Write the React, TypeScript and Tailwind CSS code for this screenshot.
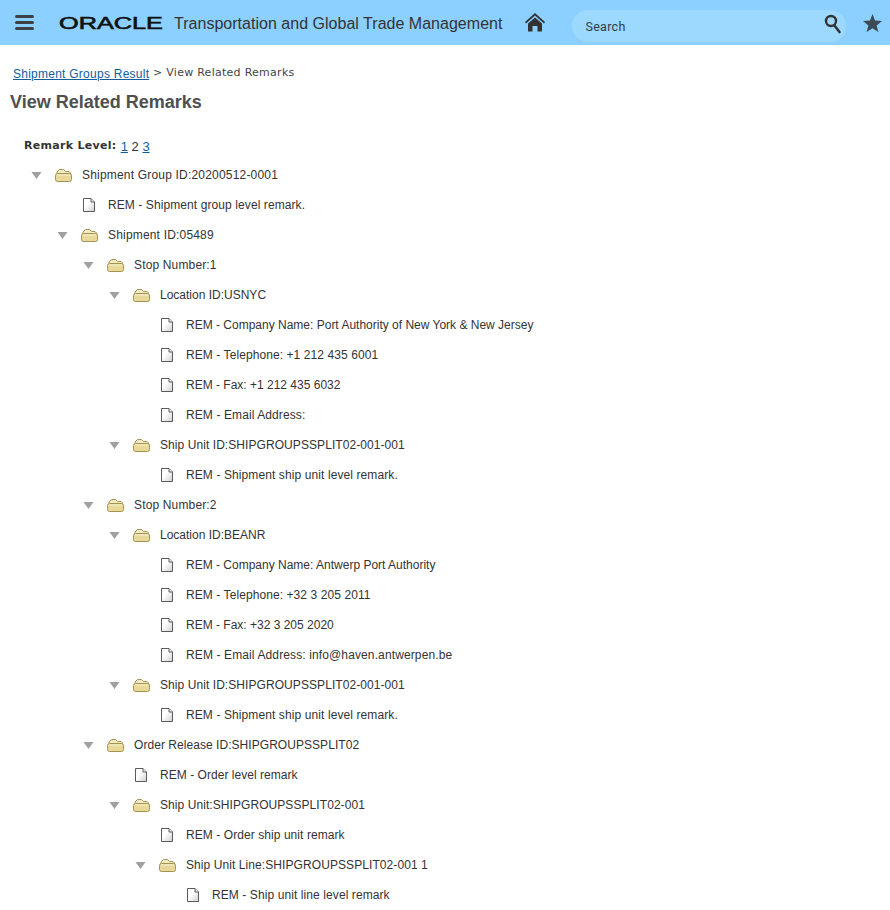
import React from 'react';

type Row = { level: number; text: string; folder?: boolean; ls?: number };

const ROWS: Row[] = [
  { level: 0, text: 'Shipment Group ID:20200512-0001', folder: true, ls: 0.19 },
  { level: 1, text: 'REM - Shipment group level remark.', ls: 0.09 },
  { level: 1, text: 'Shipment ID:05489', folder: true, ls: 0.18 },
  { level: 2, text: 'Stop Number:1', folder: true, ls: 0.15 },
  { level: 3, text: 'Location ID:USNYC', folder: true },
  { level: 4, text: 'REM - Company Name: Port Authority of New York & New Jersey' },
  { level: 4, text: 'REM - Telephone: +1 212 435 6001', ls: 0.08 },
  { level: 4, text: 'REM - Fax: +1 212 435 6032' },
  { level: 4, text: 'REM - Email Address:', ls: 0.1 },
  { level: 3, text: 'Ship Unit ID:SHIPGROUPSSPLIT02-001-001', folder: true, ls: 0.07 },
  { level: 4, text: 'REM - Shipment ship unit level remark.', ls: 0.1 },
  { level: 2, text: 'Stop Number:2', folder: true, ls: 0.15 },
  { level: 3, text: 'Location ID:BEANR', folder: true },
  { level: 4, text: 'REM - Company Name: Antwerp Port Authority' },
  { level: 4, text: 'REM - Telephone: +32 3 205 2011', ls: 0.08 },
  { level: 4, text: 'REM - Fax: +32 3 205 2020' },
  { level: 4, text: 'REM - Email Address: info@haven.antwerpen.be', ls: 0.12 },
  { level: 3, text: 'Ship Unit ID:SHIPGROUPSSPLIT02-001-001', folder: true, ls: 0.07 },
  { level: 4, text: 'REM - Shipment ship unit level remark.', ls: 0.1 },
  { level: 2, text: 'Order Release ID:SHIPGROUPSSPLIT02', folder: true, ls: 0.05 },
  { level: 3, text: 'REM - Order level remark', ls: 0.04 },
  { level: 3, text: 'Ship Unit:SHIPGROUPSSPLIT02-001', folder: true, ls: 0.07 },
  { level: 4, text: 'REM - Order ship unit remark', ls: 0.07 },
  { level: 4, text: 'Ship Unit Line:SHIPGROUPSSPLIT02-001 1', folder: true, ls: 0.08 },
  { level: 5, text: 'REM - Ship unit line level remark', ls: 0.09 },
];

const Arrow = () => (
  <svg width="11" height="7" viewBox="0 0 11 7" className="shrink-0">
    <path d="M0.5 0H10.5L5.5 7Z" fill="#a0a0a0" />
  </svg>
);

const Folder = () => (
  <svg width="17" height="13" viewBox="0 0 17 13" className="shrink-0">
    <path d="M2 4.5V3L4.5 0.5H8.5L10.5 2.5H14L15.5 4V5" fill="#f3eac4" stroke="#a39352" />
    <path d="M0.5 6.5Q0.5 4.5 2.5 4.5H14.5Q16.5 4.5 16.5 6.5V10.5Q16.5 12.5 14.5 12.5H2.5Q0.5 12.5 0.5 10.5Z" fill="#e8d99b" stroke="#a39352" />
    <path d="M2 6H15" stroke="#f6efd0" />
  </svg>
);

const Doc = () => (
  <svg width="12" height="14" viewBox="0 0 12 14" className="ml-px shrink-0">
    <defs>
      <linearGradient id="docFill" x1="0" y1="0" x2="1" y2="1">
        <stop offset="0.4" stopColor="#ffffff" />
        <stop offset="1" stopColor="#cfcfcf" />
      </linearGradient>
    </defs>
    <path d="M0.5 0.5H8L11.5 4V13.5H0.5Z" fill="url(#docFill)" stroke="#5a5a5a" />
    <path d="M8 0.5V4H11.5" fill="#eeeeee" stroke="#5a5a5a" />
  </svg>
);

const TreeRow = ({ row }: { row: Row }) => (
  <div className="flex h-[30px] items-center" style={{ paddingLeft: row.level * 26 }}>
    {row.folder ? (
      <>
        <span className="ml-[31px] flex w-[24px] shrink-0"><Arrow /></span>
        <span className="flex w-[27px] shrink-0"><Folder /></span>
      </>
    ) : (
      <span className="ml-[56px] flex w-[26px] shrink-0"><Doc /></span>
    )}
    <span className="whitespace-pre text-[#333333]" style={{ letterSpacing: row.ls ?? 0 }}>{row.text}</span>
  </div>
);

export default function App() {
  return (
    <div className="min-h-[910px] bg-white font-['Liberation_Sans',sans-serif] text-[12px]">
      {/* Header */}
      <header className="flex h-[45px] items-center bg-[#8bd0ff]">
        <div className="ml-[15px] flex w-[19px] flex-col gap-[2.5px]">
          <span className="h-[3.5px] rounded-sm bg-[#3d4045]" />
          <span className="h-[3.5px] rounded-sm bg-[#3d4045]" />
          <span className="h-[3.5px] rounded-sm bg-[#3d4045]" />
        </div>
        <svg width="106" height="20" viewBox="0 0 106 20" className="ml-[25px] shrink-0">
          <text x="0" y="15.5" textLength="104" lengthAdjust="spacingAndGlyphs" fontFamily="Liberation Sans" fontWeight="400" fontSize="17" stroke="#111111" strokeWidth="0.6" fill="#111111">ORACLE</text>
        </svg>
        <span className="ml-[9px] mt-[3px] whitespace-nowrap text-[16px] tracking-[0.02px] text-[#333333]">Transportation and Global Trade Management</span>
        <svg width="20" height="19" viewBox="0 0 20 19" className="ml-[23px] shrink-0">
          <path d="M10 0L0 9L1 10.5L10 2.6L19 10.5L20 9Z" fill="#333333" />
          <path d="M3 10.5L10 4.5L17 10.5V18.5H12.5V13H7.5V18.5H3Z" fill="#333333" />
        </svg>
        <div className="relative ml-[27px] mt-[7px] flex h-[32px] w-[274px] items-center rounded-[16px] bg-[#9dd9ff] pl-[13px] pt-[2px] font-['Roboto',sans-serif] text-[12.5px] tracking-[0.3px] text-[#333a4a]">
          Search
          <svg width="18" height="20" viewBox="0 0 18 20" className="absolute right-[4px] top-[4px]">
            <circle cx="7" cy="7" r="5" fill="none" stroke="#333333" strokeWidth="2.4" />
            <path d="M10.5 11.5L15.5 18" stroke="#333333" strokeWidth="2.6" strokeLinecap="round" />
          </svg>
        </div>
        <svg width="19" height="18" viewBox="0 0 19 18" className="ml-[17px] shrink-0">
          <path d="M9.5 0L12 6.4L19 7L13.6 11.4L15.4 18L9.5 14.3L3.6 18L5.4 11.4L0 7L7 6.4Z" fill="#3d4a55" />
        </svg>
      </header>

      {/* Breadcrumb */}
      <div className="ml-[13px] mt-[21px] flex h-[15px] items-center whitespace-pre">
        <a href="#" className="tracking-[0.25px] text-[#145c9e] underline">Shipment Groups Result</a>
        <span className="font-['DejaVu_Sans',sans-serif] text-[11px] tracking-[0.27px] text-[#444444]"> &gt; View Related Remarks</span>
      </div>

      <h1 className="ml-[10px] mt-[9px] h-[24px] text-[18px] font-bold leading-[24px] text-[#4f4f4f]">View Related Remarks</h1>

      {/* Remark level */}
      <div className="ml-[24px] mt-[25px] flex h-[15px] items-center whitespace-pre font-['DejaVu_Sans',sans-serif] text-[11px] text-[#333333]">
        <b className="tracking-[0.3px]">Remark Level: </b>
        <a href="#" className="font-['Liberation_Sans',sans-serif] text-[13px] text-[#145c9e] underline">1</a>
        <span className="font-['Liberation_Sans',sans-serif] text-[13px]"> 2 </span>
        <a href="#" className="font-['Liberation_Sans',sans-serif] text-[13px] text-[#145c9e] underline">3</a>
      </div>

      {/* Tree */}
      <div className="mt-[6px]">
        {ROWS.map((row, i) => (
          <TreeRow key={i} row={row} />
        ))}
      </div>
    </div>
  );
}
